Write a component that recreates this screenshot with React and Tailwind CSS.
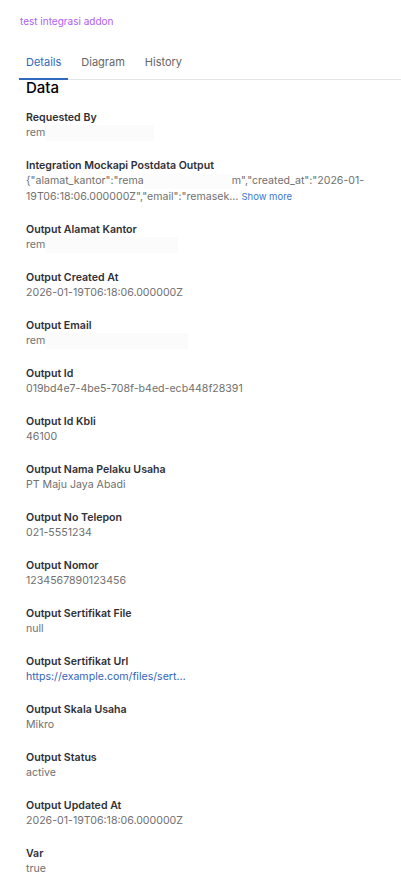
import { useState } from "react";

// ===================== DATA =====================
const fields = [
  { label: "Requested By", value: "rem", hidden: 109 },
  { label: "Integration Mockapi Postdata Output", json: true },
  { label: "Output Alamat Kantor", value: "rem", hidden: 133 },
  { label: "Output Created At", value: "2026-01-19T06:18:06.000000Z" },
  { label: "Output Email", value: "rem", hidden: 143 },
  { label: "Output Id", value: "019bd4e7-4be5-708f-b4ed-ecb448f28391" },
  { label: "Output Id Kbli", value: "46100" },
  { label: "Output Nama Pelaku Usaha", value: "PT Maju Jaya Abadi" },
  { label: "Output No Telepon", value: "021-5551234" },
  { label: "Output Nomor", value: "1234567890123456" },
  { label: "Output Sertifikat File", value: "null" },
  { label: "Output Sertifikat Url", value: "https://example.com/files/sert…", link: true },
  { label: "Output Skala Usaha", value: "Mikro" },
  { label: "Output Status", value: "active" },
  { label: "Output Updated At", value: "2026-01-19T06:18:06.000000Z" },
  { label: "Var", value: "true" },
];

const tabs = ["Details", "Diagram", "History"];

function Field({ f }) {
  return (
    <div className="flex flex-col">
      <div className="text-[10.6px] leading-[15px] font-semibold text-[#2f3036]">
        {f.label}
      </div>

      {f.json ? (
        <div className="text-[10.6px] leading-4 text-[#707070] pr-[30px]">
          <div className="whitespace-nowrap">
            {'{"alamat_kantor":"rema'}
            <span className="inline-block align-middle w-[88px] h-[15px] bg-[#fcfcfc]" />
            {'m","created_at":"2026-01-'}
          </div>
          <div className="whitespace-nowrap">
            {'19T06:18:06.000000Z","email":"remasek… '}
            <span className="text-[9.5px] text-[#3a76cf] cursor-pointer">Show more</span>
          </div>
        </div>
      ) : (
        <div
          className={
            "text-[10.6px] leading-4 h-4 flex items-center " +
            (f.link ? "text-[#3564b8]" : "text-[#707070]")
          }
        >
          <span>{f.value}</span>
          {f.hidden && (
            <span
              className="inline-block h-4 bg-[#fbfbfb]"
              style={{ width: f.hidden }}
            />
          )}
        </div>
      )}
    </div>
  );
}

export default function App() {
  const [tab, setTab] = useState("Details");

  return (
    <div
      className="min-h-screen bg-white pt-[14px] pl-[19px]"
      style={{ fontFamily: "Inter, 'Noto Sans', sans-serif" }}
    >
      {/* TITLE */}
      <div className="pl-px text-[10px] leading-[14px] text-[#b060f2]">
        test integrasi addon
      </div>

      {/* TABS */}
      <div className="mt-[18px] flex border-b border-[#e4e4e4]">
        {tabs.map((t) => (
          <button
            key={t}
            onClick={() => setTab(t)}
            className={
              "px-[7px] pt-2 pb-2 text-[11px] leading-4 -mb-px border-b-2 mr-[6px] " +
              (tab === t
                ? "text-[#2e69bd] border-[#2e69bd]"
                : "text-[#666] border-transparent")
            }
          >
            {t}
          </button>
        ))}
      </div>

      {/* CONTENT */}
      <div className="pl-[7px]">
        <div className="text-[15px] leading-4 font-medium text-black">
          Data
        </div>

        <div className="mt-[14px] flex flex-col gap-[17px] pb-6">
          {fields.map((f) => (
            <Field key={f.label} f={f} />
          ))}
        </div>
      </div>
    </div>
  );
}
